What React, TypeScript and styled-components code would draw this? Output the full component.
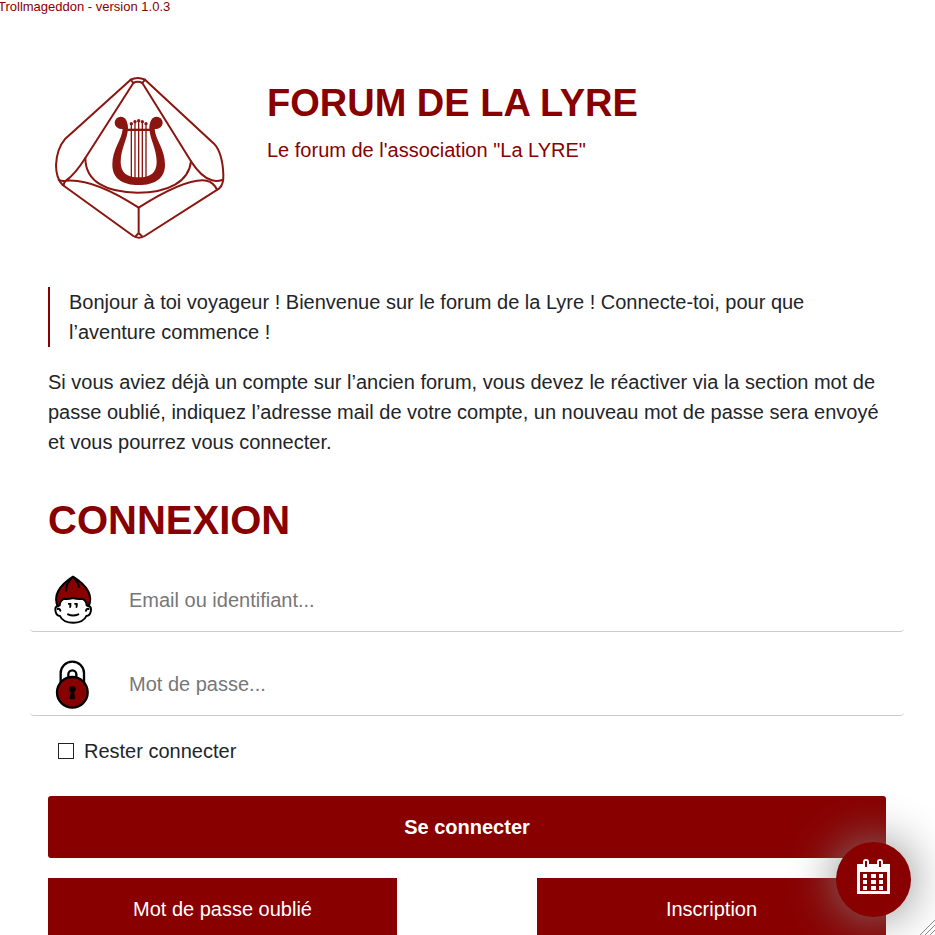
import React from "react";
import styled, { createGlobalStyle } from "styled-components";

const RED = "#880000";
const INK = "#212529";

const GlobalStyle = createGlobalStyle`
  *, *::before, *::after { box-sizing: border-box; }
  body {
    margin: 0;
    background: #fff;
    color: ${INK};
    font-family: "Liberation Sans", Arial, sans-serif;
    font-size: 20px;
    line-height: 30px;
  }
`;

const Page = styled.div`
  height: 100vh;
  overflow: hidden;
`;

const Version = styled.div`
  margin-left: -2px;
  color: ${RED};
  font-size: 13px;
  line-height: 14px;
`;

const Content = styled.div`
  padding: 59px 49px 0 48px;
`;

const Header = styled.header`
  display: flex;
  gap: 39px;
  margin-bottom: 46px;
`;

const Logo = styled.svg`
  flex: none;
  width: 180px;
  height: 168px;
`;

const Title = styled.h1`
  margin: 6px 0 8px;
  color: ${RED};
  font-size: 38px;
  line-height: 48px;
  text-transform: uppercase;
`;

const Subtitle = styled.p`
  margin: 0;
  color: ${RED};
`;

const Quote = styled.blockquote`
  margin: 0 0 20px;
  padding: 0 60px 0 19px;
  border-left: 2px solid ${RED};
`;

const Paragraph = styled.p`
  margin: 0 0 39px;
`;

const Heading = styled.h2`
  margin: 0 0 23px;
  color: ${RED};
  font-size: 40px;
  line-height: 48px;
  text-transform: uppercase;
`;

const Field = styled.label`
  display: flex;
  align-items: center;
  height: 65px;
  margin: 0 -18px 19px;
  padding: 1px 0 0 18px;
  border-bottom: 1px solid #ccc;
  border-radius: 4px;
`;

const FieldIcon = styled.svg`
  flex: none;
  width: 50px;
  height: 50px;
`;

const FieldInput = styled.input`
  flex: 1;
  min-width: 0;
  margin-left: 19px;
  padding: 0 12px;
  border: 0;
  outline: 0;
  background: transparent;
  color: ${INK};
  font: inherit;
  &::placeholder { color: #777; opacity: 1; }
`;

const Remember = styled.label`
  display: flex;
  align-items: center;
  gap: 10px;
  width: max-content;
  margin: 20px 0 30px 10px;
`;

const Checkbox = styled.input`
  appearance: none;
  width: 16px;
  height: 16px;
  margin: 0;
  border: 1px solid #222;
  background: #fff;
  &:checked { background: ${RED}; }
`;

const Button = styled.button<{ $primary?: boolean }>`
  width: 100%;
  height: 62px;
  border: 0;
  border-radius: ${(p) => (p.$primary ? 3 : 0)}px;
  background: ${RED};
  color: #fff;
  font: inherit;
  font-weight: ${(p) => (p.$primary ? 700 : 400)};
  cursor: pointer;
`;

const Actions = styled.div`
  display: grid;
  grid-template-columns: 1fr 1fr;
  column-gap: 140px;
  margin-top: 20px;
`;

const CalendarButton = styled.button`
  position: fixed;
  right: 24px;
  bottom: 18px;
  display: grid;
  place-items: center;
  width: 75px;
  height: 75px;
  padding: 0 0 6px;
  border: 0;
  border-radius: 50%;
  background: ${RED};
  box-shadow: 0 0 50px gray;
  cursor: pointer;
`;

const Grip = styled.svg`
  position: fixed;
  right: 0;
  bottom: 0;
  width: 15px;
  height: 15px;
`;

const LyreLogo = () => (
  <Logo viewBox="24 24 540 504" role="img" aria-label="La Lyre">
    <g fill="none" stroke="#8b1510" strokeWidth="6" strokeLinecap="round" strokeLinejoin="round">
      <path d="M272 44Q293 34 315 44L522 236Q548 264 550 330Q551 358 538 370L314 513Q297 523 280 513L68 360Q48 340 48 300Q50 252 76 221Z" />
      <path d="M280 54L136 279C136 350 200 383 293 383C386 383 446 350 453 289L307 54Q293 47 280 54Z" />
      <path d="M272 44L280 54M315 44L307 54" />
      <path d="M136 279Q105 328 78 347Q71 352 71 361M56 345Q68 349 78 347C130 342 202 367 296 428C393 367 462 341 500 347Q521 352 531 374M453 289Q485 338 516 346Q532 350 546 345" />
      <path d="M296 428V504L286 515M296 504L307 515" />
    </g>
    <g fill="#8b1510">
      <circle cx="242" cy="173" r="18" />
      <circle cx="350" cy="173" r="18" />
      <path d="M242 155C257 157 265 173 264 191C262 224 242 251 242 290C242 323 260 337 296 337C332 337 350 323 350 290C350 251 330 224 328 191C327 173 335 157 350 155L356 190L344 193C347 225 375 254 375 299C375 340 345 360 296 360C247 360 217 340 217 299C217 254 245 225 248 193L236 190Z" />
      <path d="M260 191H332V198H260Z" />
      <path d="M272 175H276V339H272ZM283 170H287V339H283ZM294 168H298V339H294ZM305 170H309V339H305ZM316 175H320V339H316Z" />
      <circle cx="274" cy="176" r="5" />
      <circle cx="285" cy="170" r="5" />
      <circle cx="296" cy="167" r="5" />
      <circle cx="307" cy="170" r="5" />
      <circle cx="318" cy="176" r="5" />
    </g>
  </Logo>
);

const UserIcon = () => (
  <FieldIcon viewBox="9 15 150 150" aria-hidden="true">
    <g stroke="#000" strokeWidth="6" strokeLinejoin="round" strokeLinecap="round">
      <path fill="#fff" d="M37 108C27 112 30 137 45 138C55 165 114 165 124 138C139 137 142 112 132 108" />
      <path fill={RED} d="M38 109C25 78 42 47 84 20C127 47 144 78 131 109L125 106Q124 91 111 86Q99 88 84 84Q69 88 58 86Q45 91 44 106Z" />
      <path fill="none" d="M80 24C68 36 63 48 63 62M87 24C96 34 101 44 102 51M38 117Q44 115 46 122M131 117Q125 115 123 122M69 133Q84 140 100 133" />
    </g>
    <path d="M69 99H79V108Q78 116 73 113V104H69ZM88 99H98V108Q97 116 92 113V104H88Z" />
  </FieldIcon>
);

const LockIcon = () => (
  <FieldIcon viewBox="9 15 150 150" aria-hidden="true">
    <path
      d="M47 90V57A35 34 0 0 1 117 57V90M70 75V61A12 12 0 0 1 94 61V75"
      fill="none"
      stroke="#000"
      strokeWidth="7"
    />
    <circle cx="82" cy="115" r="46" fill={RED} stroke="#000" strokeWidth="7" />
    <path d="M77 113Q69 108 72 101Q82 91 92 101Q95 108 87 113L90 134Q82 138 74 134Z" />
  </FieldIcon>
);

const CalendarIcon = () => (
  <svg width="33" height="35" viewBox="0 0 33 35" aria-hidden="true">
    <path
      fill="#fff"
      fillRule="evenodd"
      d="M0 5H6V3Q6 0 9 0Q12 0 12 3V5H20V3Q20 0 23 0Q26 0 26 3V5H33V35H0ZM3 13V32H30V13ZM8 2V8H10V2ZM22 2V8H24V2Z"
    />
    <path
      fill="#fff"
      d="M6 15H10V19H6ZM14 15H19V19H14ZM22 15H26V19H22ZM6 21H10V25H6ZM14 21H19V25H14ZM22 21H26V25H22ZM6 27H10V31H6ZM14 27H19V31H14ZM22 27H26V31H22Z"
    />
  </svg>
);

export default function App() {
  return (
    <Page>
      <GlobalStyle />
      <Version>Trollmageddon - version 1.0.3</Version>
      <Content>
        <Header>
          <LyreLogo />
          <div>
            <Title>Forum de la Lyre</Title>
            <Subtitle>Le forum de l'association "La LYRE"</Subtitle>
          </div>
        </Header>
        <Quote>
          Bonjour à toi voyageur ! Bienvenue sur le forum de la Lyre ! Connecte-toi, pour que l’aventure commence !
        </Quote>
        <Paragraph>
          Si vous aviez déjà un compte sur l’ancien forum, vous devez le réactiver via la section mot de passe oublié,
          indiquez l’adresse mail de votre compte, un nouveau mot de passe sera envoyé et vous pourrez vous connecter.
        </Paragraph>
        <form onSubmit={(e) => e.preventDefault()}>
          <Heading>Connexion</Heading>
          <Field>
            <UserIcon />
            <FieldInput type="text" aria-label="Email ou identifiant" placeholder="Email ou identifiant..." />
          </Field>
          <Field>
            <LockIcon />
            <FieldInput type="password" aria-label="Mot de passe" placeholder="Mot de passe..." />
          </Field>
          <Remember>
            <Checkbox type="checkbox" />
            Rester connecter
          </Remember>
          <Button type="submit" $primary>Se connecter</Button>
          <Actions>
            <Button type="button">Mot de passe oublié</Button>
            <Button type="button">Inscription</Button>
          </Actions>
        </form>
      </Content>
      <CalendarButton type="button" aria-label="Calendrier">
        <CalendarIcon />
      </CalendarButton>
      <Grip viewBox="0 0 15 15" aria-hidden="true">
        <path d="M0 15L15 0M5 15L15 5M10 15L15 10" stroke="#888" strokeWidth="1" />
      </Grip>
    </Page>
  );
}
